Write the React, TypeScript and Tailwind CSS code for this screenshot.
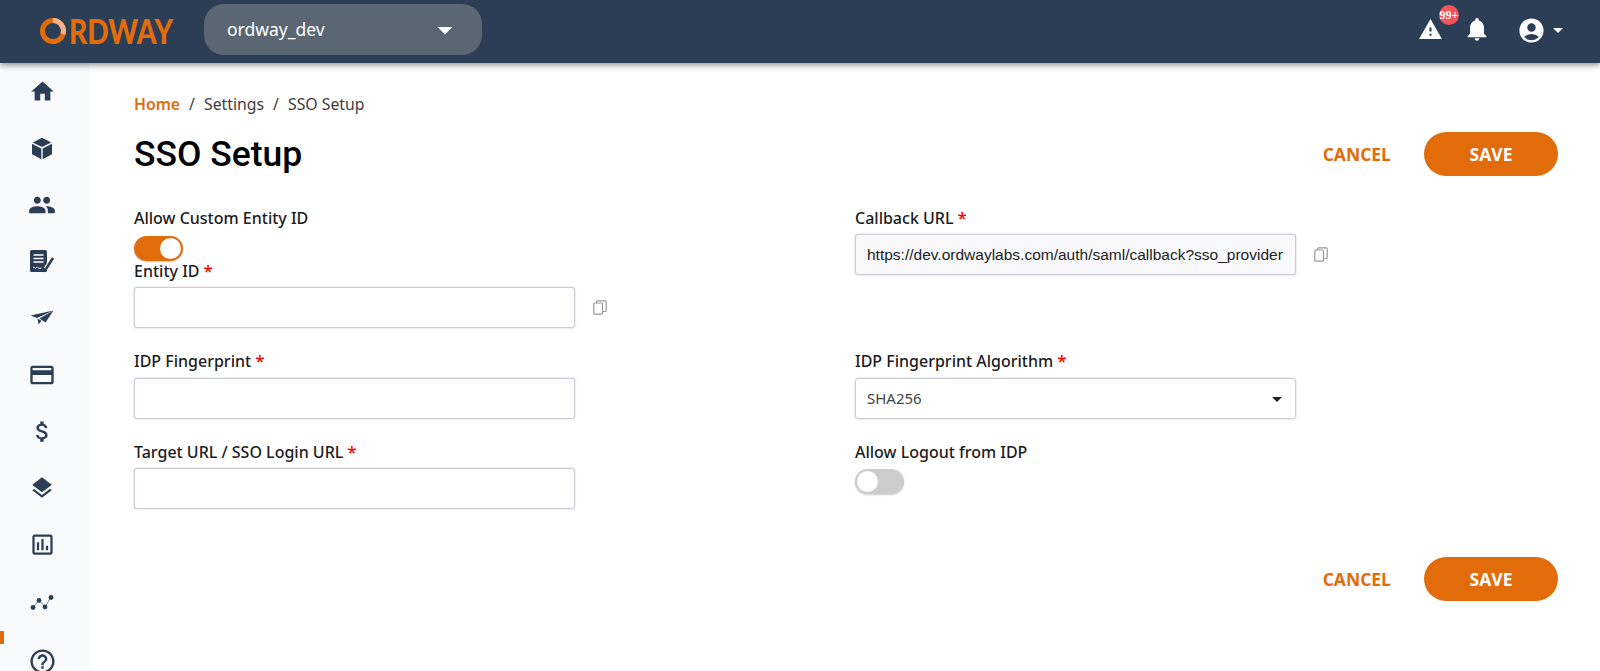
import {
  MdHome,
  MdPeople,
  MdCreditCard,
  MdAttachMoney,
  MdLayers,
  MdOutlineAssessment,
  MdHelpOutline,
  MdWarning,
  MdNotifications,
  MdAccountCircle,
  MdArrowDropDown,
} from 'react-icons/md'

const sans = 'font-["Noto_Sans",sans-serif]'

function Logo() {
  return (
    <svg width="160" height="50" viewBox="0 -10 160 50" className="shrink-0 mb-[2px]">
      <circle cx="13" cy="15" r="10.5" fill="none" stroke="#e36c0a" strokeWidth="5" />
      <path d="M13 4.5a10.5 10.5 0 0 1 10 13.5" fill="none" stroke="#f2b48c" strokeWidth="5" />
      <text
        x="29"
        y="23.6"
        transform="scale(1 1.167)"
        fill="#e36c0a"
        fontFamily="Lato, sans-serif"
        fontWeight="900"
        fontSize="30"
        textLength="104"
        lengthAdjust="spacingAndGlyphs"
      >
        RDWAY
      </text>
    </svg>
  )
}

function CubeIcon() {
  return (
    <svg width="22" height="23" viewBox="0 0 22 23" fill="#2c3e55">
      <path d="M11 .8 20.2 5.4 11 10 1.8 5.4z" />
      <path d="M1 6.8 10.3 11.4V22.2L1 17.2z" />
      <path d="M21 6.8 11.7 11.4V22.2L21 17.2z" />
    </svg>
  )
}

function PlaneIcon() {
  return (
    <svg width="24" height="24" viewBox="0 0 24 24" fill="#2c3e55">
      <path d="M.5 9.5 23.5 4.5 7 12z" />
      <path d="M23.5 4.5 9.5 12.5l6 4z" />
      <path d="M7.5 12.5l1 6 3-3.8z" />
    </svg>
  )
}

function DocIcon() {
  return (
    <svg width="26" height="24" viewBox="0 0 26 24" fill="none">
      <rect x="1" y="1" width="17" height="22" rx="1.5" fill="#2c3e55" />
      <path d="M4.5 6h10M4.5 9.5h10M4.5 13h10" stroke="#fff" strokeWidth="1.4" />
      <path d="M4 19c1.5-2 2 1 3 0s1.5-1 2.5 0 2 0 3 0" stroke="#fff" strokeWidth="1" />
      <path d="M17 20 24 9" stroke="#fff" strokeWidth="5" />
      <path d="M17 20 24 9" stroke="#2c3e55" strokeWidth="2.6" />
      <path d="M15.5 23l1.2-2.6" stroke="#2c3e55" strokeWidth="1.4" />
    </svg>
  )
}

function DotsIcon() {
  return (
    <svg width="24" height="24" viewBox="0 0 24 24" fill="#2c3e55">
      <path d="M3 17.5 9 10l6 7 6-10" fill="none" stroke="#7b8896" strokeWidth="1" />
      <circle cx="3" cy="17.5" r="2.4" />
      <circle cx="9" cy="10.5" r="2.4" />
      <circle cx="15" cy="17" r="2.4" />
      <circle cx="21" cy="7.5" r="2.4" />
    </svg>
  )
}

function CopyIcon() {
  return (
    <svg width="14" height="15" viewBox="0 0 14 15" fill="none" stroke="#9a9a9a" strokeWidth="1.2" className="ml-[18px]">
      <rect x="0.8" y="3" width="8.7" height="11.2" rx="1" />
      <path d="M3.5 3V1.8a1 1 0 0 1 1-1h7.7a1 1 0 0 1 1 1v8.7a1 1 0 0 1-1 1H9.5" />
    </svg>
  )
}

function Sidebar() {
  const cls = 'h-[56.7px] flex items-center justify-center shrink-0'
  return (
    <aside className="w-[89px] shrink-0 bg-[#f9fafc] flex flex-col pr-[5px] relative h-[608px] overflow-hidden">
      <div className={cls}><MdHome size={27} color="#2c3e55" /></div>
      <div className={cls}><CubeIcon /></div>
      <div className={cls}><MdPeople size={28} color="#2c3e55" /></div>
      <div className={cls}><DocIcon /></div>
      <div className={cls}><PlaneIcon /></div>
      <div className={cls}><MdCreditCard size={28} color="#2c3e55" /></div>
      <div className={cls}><MdAttachMoney size={27} color="#2c3e55" /></div>
      <div className={cls}><MdLayers size={26} color="#2c3e55" /></div>
      <div className={cls}><MdOutlineAssessment size={27} color="#2c3e55" /></div>
      <div className={cls}><DotsIcon /></div>
      <div className={`${cls} mt-[3px]`}><MdHelpOutline size={29} color="#2c3e55" /></div>
      <div className="absolute left-0 top-[568px] w-[4px] h-[13px] bg-[#e36c0a]" />
    </aside>
  )
}

function Label({ text, required }: { text: string; required?: boolean }) {
  return (
    <div className="text-[16px] leading-[20px] font-medium text-[#1c1c1c]">
      {text}
      {required && <span className="text-[#f00] text-[17px] ml-[4px]">*</span>}
    </div>
  )
}

function Input({ value, disabled }: { value?: string; disabled?: boolean }) {
  return (
    <div
      className={`w-[441px] h-[41px] border border-[#ccccd6] rounded-[3px] shadow-[0_0_2px_#c4c4d0] flex items-center px-[11px] overflow-hidden whitespace-nowrap font-['Liberation_Sans',sans-serif] text-[15.5px] text-[#222] ${disabled ? 'bg-[#f9f9fb]' : 'bg-white'}`}
    >
      {value}
    </div>
  )
}

function Toggle({ on }: { on?: boolean }) {
  return (
    <div
      className={`w-[49px] h-[25px] rounded-full p-[2px] flex shadow-[0_1px_2px_rgba(0,0,0,0.2)] ${on ? 'bg-[#e36c0a] justify-end' : 'bg-[#cccccc] justify-start'}`}
    >
      <div className="w-[21px] h-[21px] rounded-full bg-white" />
    </div>
  )
}

function Actions() {
  return (
    <div className="flex items-center gap-[33px]">
      <button className="text-[#e36c0a] font-['Open_Sans',sans-serif] font-bold text-[17.5px]">CANCEL</button>
      <button className="w-[134px] h-[44px] rounded-full bg-[#e36c0a] text-white font-['Open_Sans',sans-serif] font-bold text-[17.5px]">
        SAVE
      </button>
    </div>
  )
}

export default function App() {
  return (
    <div className={`w-[1600px] h-[671px] overflow-hidden bg-white ${sans}`}>
      <header className="relative z-10 h-[63px] bg-[#2c3e55] shadow-[0_2px_6px_rgba(0,0,0,0.45)] flex items-center pl-[40px] pr-[30px]">
        <Logo />
        <div className="ml-[4px] mb-[4px] w-[278px] h-[51px] rounded-[20px] bg-[#5a6672] flex items-center justify-between pl-[23px] pr-[19px] text-white text-[17.5px]">
          <span>ordway_dev</span>
          <MdArrowDropDown size={36} />
        </div>
        <div className="ml-auto flex items-center text-white mb-[5px]">
          <div className="relative mr-[20px]">
            <MdWarning size={25} />
            <span className="absolute -top-[12px] left-[21px] w-[20px] h-[20px] rounded-full bg-[#f2545b] font-['Liberation_Serif',serif] font-bold text-[12px] leading-[20px] text-center">
              99+
            </span>
          </div>
          <MdNotifications size={28} />
          <MdAccountCircle size={29} className="ml-[26px] mt-[2px]" />
          <MdArrowDropDown size={24} className="mt-[2px]" />
        </div>
      </header>
      <div className="flex">
        <Sidebar />
        <main className="flex-1 pl-[45px] pr-[42px] pt-[31px]">
          <div className="text-[15.8px] leading-[20px] text-[#3c3c3c] flex">
            <span className="text-[#e36c0a] font-semibold">Home</span>
            <span className="mx-[9px]">/</span>
            <span>Settings</span>
            <span className="mx-[9px]">/</span>
            <span>SSO Setup</span>
          </div>
          <div className="flex items-center justify-between mt-[18px]">
            <h1 className="font-['Roboto',sans-serif] font-medium text-[35.5px] leading-[44px] text-black">SSO Setup</h1>
            <Actions />
          </div>
          <div className="flex mt-[32px]">
            <div className="w-[721px] flex flex-col">
              <Label text="Allow Custom Entity ID" />
              <div className="mt-[8px]">
                <Toggle on />
              </div>
              <Label text="Entity ID" required />
              <div className="flex items-center mt-[6px]">
                <Input />
                <CopyIcon />
              </div>
              <div className="mt-[23px]">
                <Label text="IDP Fingerprint" required />
              </div>
              <div className="mt-[7px]">
                <Input />
              </div>
              <div className="mt-[23px]">
                <Label text="Target URL / SSO Login URL" required />
              </div>
              <div className="mt-[6px]">
                <Input />
              </div>
            </div>
            <div className="flex flex-col">
              <Label text="Callback URL" required />
              <div className="flex items-center mt-[6px]">
                <Input disabled value="https://dev.ordwaylabs.com/auth/saml/callback?sso_provider" />
                <CopyIcon />
              </div>
              <div className="mt-[76px]">
                <Label text="IDP Fingerprint Algorithm" required />
              </div>
              <div className="mt-[7px] w-[441px] h-[41px] border border-[#ccccd6] rounded-[3px] shadow-[0_0_2px_#c4c4d0] flex items-center justify-between pl-[11px] pr-[6px] text-[15px] text-[#444]">
                <span>SHA256</span>
                <MdArrowDropDown size={24} color="#222" />
              </div>
              <div className="mt-[23px]">
                <Label text="Allow Logout from IDP" />
              </div>
              <div className="mt-[7px]">
                <Toggle />
              </div>
            </div>
          </div>
          <div className="flex justify-end mt-[48px]">
            <Actions />
          </div>
        </main>
      </div>
    </div>
  )
}
